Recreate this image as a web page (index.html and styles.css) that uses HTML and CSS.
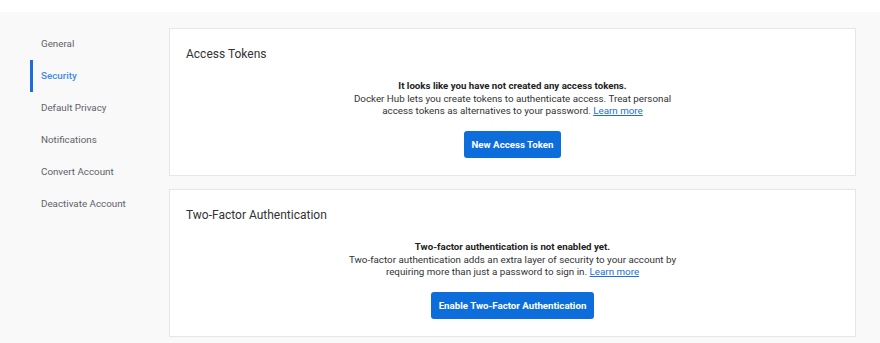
FILE: index.html
```html
<!DOCTYPE html>
<html lang="en">
<head>
<meta charset="utf-8">
<title>Security</title>
<link rel="stylesheet" href="styles.css">
</head>
<body>
<div class="topbar"></div>
<div class="page">
  <nav class="sidenav">
    <a class="nav-item">General</a>
    <a class="nav-item active">Security</a>
    <a class="nav-item">Default Privacy</a>
    <a class="nav-item">Notifications</a>
    <a class="nav-item">Convert Account</a>
    <a class="nav-item">Deactivate Account</a>
  </nav>
  <main class="main">
    <section class="card">
      <h2 class="card-title">Access Tokens</h2>
      <div class="empty">
        <p class="empty-title">It looks like you have not created any access tokens.</p>
        <p class="empty-text">Docker Hub lets you create tokens to authenticate access. Treat personal<br>access tokens as alternatives to your password. <a class="link">Learn more</a></p>
        <button class="btn">New Access Token</button>
      </div>
    </section>
    <section class="card">
      <h2 class="card-title">Two-Factor Authentication</h2>
      <div class="empty">
        <p class="empty-title">Two-factor authentication is not enabled yet.</p>
        <p class="empty-text">Two-factor authentication adds an extra layer of security to your account by<br>requiring more than just a password to sign in. <a class="link">Learn more</a></p>
        <button class="btn">Enable Two-Factor Authentication</button>
      </div>
    </section>
  </main>
</div>
</body>
</html>
```

FILE: styles.css
```css
html, body {
  margin: 0;
  padding: 0;
  background: #f9f9f9;
  font-family: Roboto, "Liberation Sans", Arial, sans-serif;
  color: #333;
}

.topbar {
  height: 12px;
  background: #ffffff;
}

.page {
  display: flex;
  padding: 16px 24px 8px 30px;
  min-height: 315px;
  box-sizing: border-box;
}

.sidenav {
  width: 139px;
  flex: none;
  display: flex;
  flex-direction: column;
}

.nav-item {
  display: flex;
  align-items: center;
  height: 32px;
  padding-bottom: 1px;
  box-sizing: border-box;
  border-left: 3px solid transparent;
  padding-left: 8px;
  font-size: 9.8px;
  color: #5f6368;
  cursor: pointer;
}

.nav-item.active {
  border-left-color: #1a6fdc;
  color: #3f8ae6;
  font-weight: 500;
}

.main {
  flex: 1;
  display: flex;
  flex-direction: column;
  gap: 13px;
}

.card {
  background: #fff;
  border: 1px solid #e6e6e6;
  padding: 17px 16px 17px;
}

.card-title {
  margin: 0;
  font-size: 12px;
  line-height: 16px;
  font-weight: 400;
  color: #333;
}

.empty {
  display: flex;
  flex-direction: column;
  align-items: center;
  text-align: center;
  margin-top: 18px;
}

.empty-title {
  margin: 0;
  font-size: 9.7px;
  line-height: 12.5px;
  font-weight: 700;
  color: #222;
}

.empty-text {
  margin: 0;
  font-size: 9.8px;
  line-height: 12.5px;
  color: #333;
}

.link {
  color: #1a6fd8;
  text-decoration: underline;
  cursor: pointer;
}

.btn {
  margin-top: 13.5px;
  height: 27px;
  padding: 0 8px;
  border: none;
  border-radius: 3px;
  background: #0d6edb;
  color: #fff;
  font-family: Roboto, "Liberation Sans", Arial, sans-serif;
  font-size: 9.7px;
  font-weight: 700;
  cursor: pointer;
}
```
